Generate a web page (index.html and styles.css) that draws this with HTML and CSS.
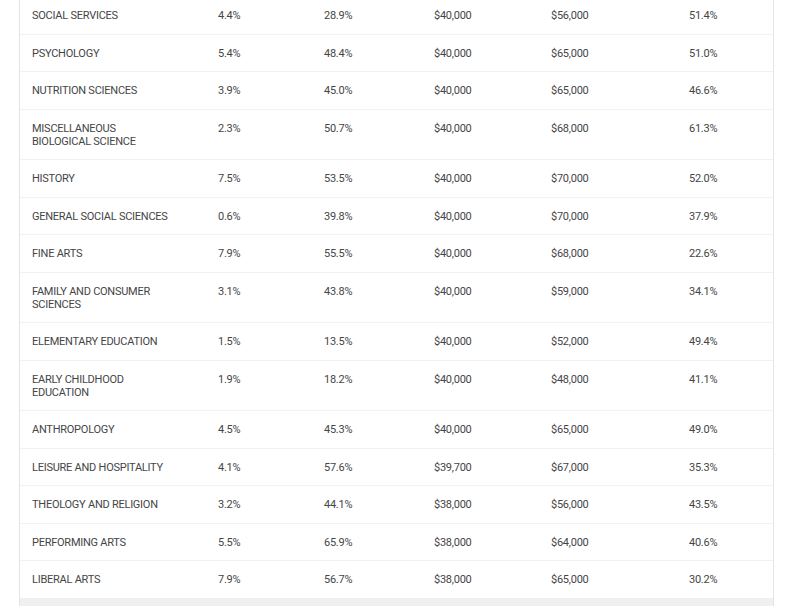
FILE: index.html
```html
<!DOCTYPE html>
<html>
<head>
<meta charset="utf-8">
<link rel="stylesheet" href="styles.css">
</head>
<body>
<div class="wrap">
<table class="data">
<colgroup>
<col class="c1"><col class="c2"><col class="c3"><col class="c4"><col class="c5"><col class="c6">
</colgroup>
<tbody>
<tr><td class="name">SOCIAL SERVICES</td><td>4.4%</td><td>28.9%</td><td>$40,000</td><td>$56,000</td><td>51.4%</td></tr>
<tr><td class="name">PSYCHOLOGY</td><td>5.4%</td><td>48.4%</td><td>$40,000</td><td>$65,000</td><td>51.0%</td></tr>
<tr><td class="name">NUTRITION SCIENCES</td><td>3.9%</td><td>45.0%</td><td>$40,000</td><td>$65,000</td><td>46.6%</td></tr>
<tr><td class="name">MISCELLANEOUS BIOLOGICAL SCIENCE</td><td>2.3%</td><td>50.7%</td><td>$40,000</td><td>$68,000</td><td>61.3%</td></tr>
<tr><td class="name">HISTORY</td><td>7.5%</td><td>53.5%</td><td>$40,000</td><td>$70,000</td><td>52.0%</td></tr>
<tr><td class="name">GENERAL SOCIAL SCIENCES</td><td>0.6%</td><td>39.8%</td><td>$40,000</td><td>$70,000</td><td>37.9%</td></tr>
<tr><td class="name">FINE ARTS</td><td>7.9%</td><td>55.5%</td><td>$40,000</td><td>$68,000</td><td>22.6%</td></tr>
<tr><td class="name">FAMILY AND CONSUMER SCIENCES</td><td>3.1%</td><td>43.8%</td><td>$40,000</td><td>$59,000</td><td>34.1%</td></tr>
<tr><td class="name">ELEMENTARY EDUCATION</td><td>1.5%</td><td>13.5%</td><td>$40,000</td><td>$52,000</td><td>49.4%</td></tr>
<tr><td class="name">EARLY CHILDHOOD EDUCATION</td><td>1.9%</td><td>18.2%</td><td>$40,000</td><td>$48,000</td><td>41.1%</td></tr>
<tr><td class="name">ANTHROPOLOGY</td><td>4.5%</td><td>45.3%</td><td>$40,000</td><td>$65,000</td><td>49.0%</td></tr>
<tr><td class="name">LEISURE AND HOSPITALITY</td><td>4.1%</td><td>57.6%</td><td>$39,700</td><td>$67,000</td><td>35.3%</td></tr>
<tr><td class="name">THEOLOGY AND RELIGION</td><td>3.2%</td><td>44.1%</td><td>$38,000</td><td>$56,000</td><td>43.5%</td></tr>
<tr><td class="name">PERFORMING ARTS</td><td>5.5%</td><td>65.9%</td><td>$38,000</td><td>$64,000</td><td>40.6%</td></tr>
<tr><td class="name">LIBERAL ARTS</td><td>7.9%</td><td>56.7%</td><td>$38,000</td><td>$65,000</td><td>30.2%</td></tr>
</tbody>
</table>
<div class="foot"></div>
</div>
</body>
</html>
```
FILE: styles.css
```css
html, body {
  margin: 0;
  padding: 0;
  background: #ffffff;
}
body {
  font-family: Roboto, "Liberation Sans", Arial, sans-serif;
  font-size: 11px;
  letter-spacing: -0.25px;
  color: #454545;
  overflow: hidden;
}
.wrap {
  margin: -3px 26px 0 19px;
  width: 753px;
  border-left: 1px solid #e4e4e4;
  border-right: 1px solid #e4e4e4;
}
.data {
  width: 753px;
  border-collapse: collapse;
  table-layout: fixed;
}
.c1 { width: 186px; }
.c2 { width: 106px; }
.c3 { width: 110px; }
.c4 { width: 117px; }
.c5 { width: 138px; }
.c6 { width: 96px; }
.data td {
  padding: 12px 8px 11.5px 12px;
  line-height: 13px;
  vertical-align: top;
  border-bottom: 1px solid #f2f2f2;
  white-space: nowrap;
}
.data td.name {
  white-space: normal;
  padding-right: 32px;
}
.data tr:last-child td {
  border-bottom: none;
}
.foot {
  height: 8px;
  background: #f0f0f0;
}
```
